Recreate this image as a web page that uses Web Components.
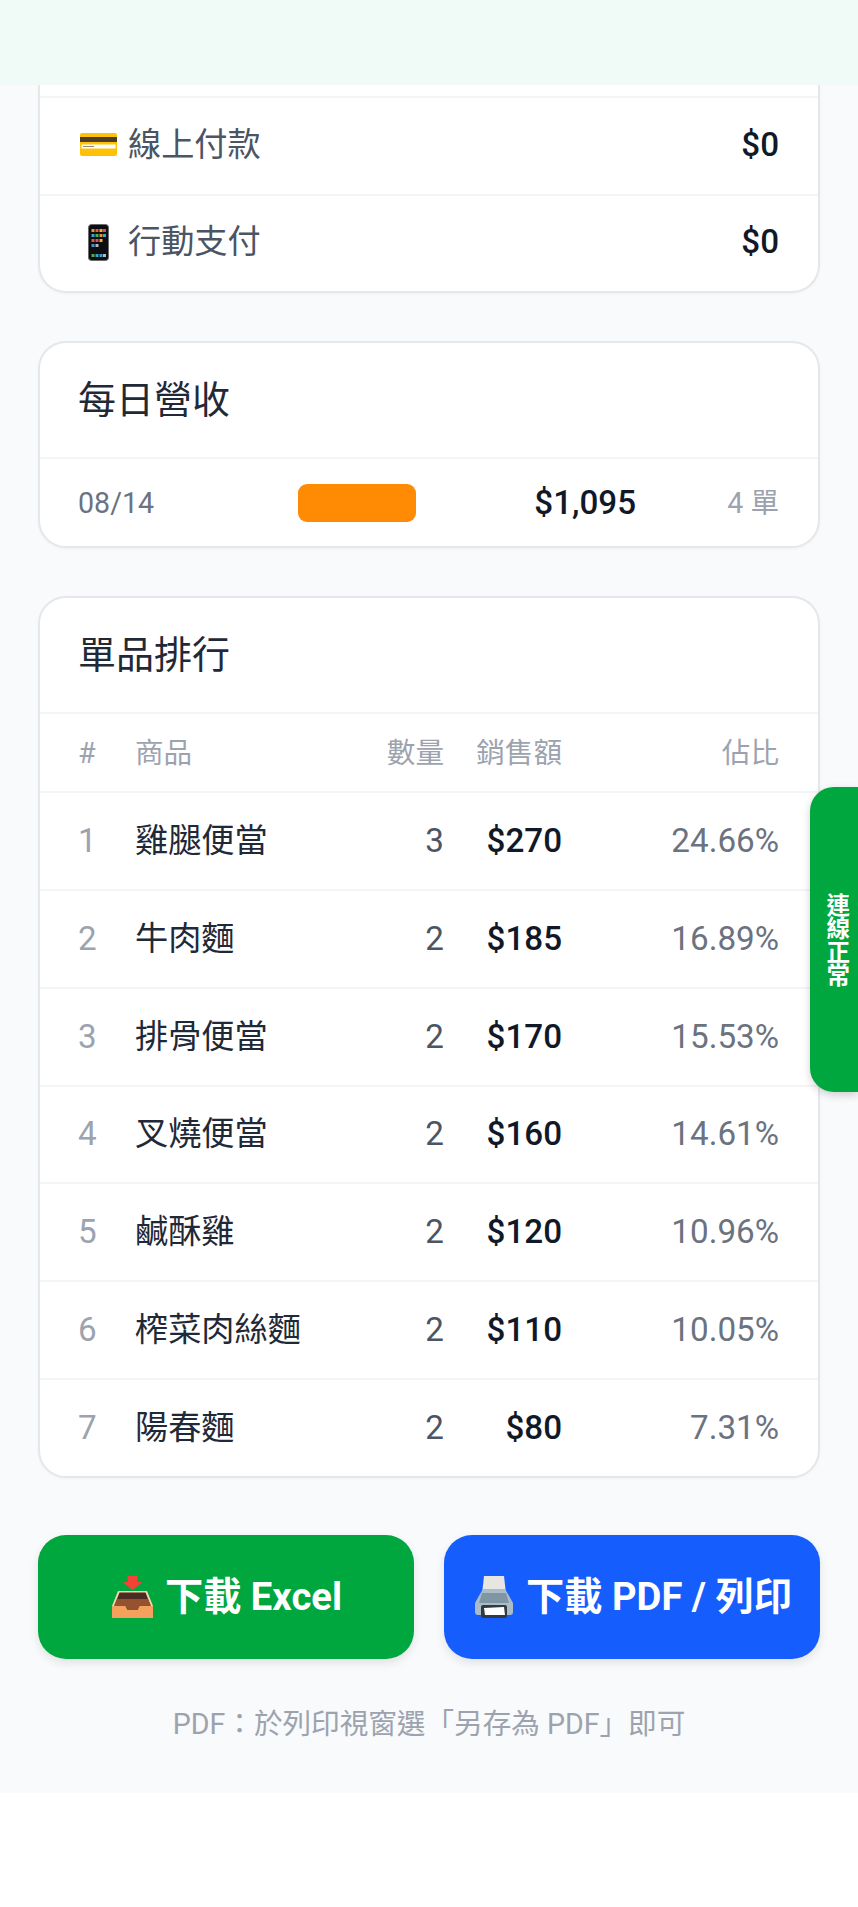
<!DOCTYPE html>
<html lang="zh-Hant">
<head>
<meta charset="utf-8">
<title>報表</title>
<style>
html,body{margin:0;padding:0;background:#fff;}
body{font-family:Roboto,"Noto Sans CJK TC",sans-serif;min-height:1907px;}
</style>
</head>
<body>
<report-page>
  <top-bar slot="top"></top-bar>

  <info-card clipped>
    <div style="height:11px"></div>
    <pay-row amount="$0">
      <svg slot="icon" width="37" height="23" viewBox="0 0 37 23"><rect width="37" height="23" rx="2" fill="#ffc107"/><rect y="4" width="37" height="5" fill="#4b3d2a"/><rect x="1.5" y="11.5" width="34" height="4" fill="#fff"/><path d="M3 13.5h11" stroke="#8a8a8a" stroke-width="1.2"/></svg>
      線上付款
    </pay-row>
    <pay-row amount="$0">
      <svg slot="icon" width="21" height="37" viewBox="0 0 21 37"><rect x="0.5" y="0.5" width="20" height="36" rx="3" fill="#0d0d12" stroke="#6b6b70"/><g><rect x="3.5" y="5" width="3" height="3" fill="#e8912d"/><rect x="7.5" y="5" width="3" height="3" fill="#e05a4a"/><rect x="11.500" y="5" width="3" height="3" fill="#f0b429"/><rect x="15" y="5" width="3" height="3" fill="#d64a7a"/><rect x="3.5" y="10" width="3" height="3" fill="#35a7c9"/><rect x="7.5" y="10" width="3" height="3" fill="#4cb050"/><rect x="11.500" y="10" width="3" height="3" fill="#e8912d"/><rect x="15" y="10" width="3" height="3" fill="#35a7c9"/><rect x="3.5" y="15" width="3" height="3" fill="#e05a4a"/><rect x="7.5" y="15" width="3" height="3" fill="#d64a7a"/><rect x="11.500" y="15" width="3" height="3" fill="#f0b429"/><rect x="3.5" y="20" width="3" height="3" fill="#4a90c9"/><rect x="7.5" y="20" width="3" height="3" fill="#b0b8c0"/><rect x="3.5" y="30" width="3" height="3" fill="#4cb050"/><rect x="7.5" y="30" width="3" height="3" fill="#35a7c9"/><rect x="11.500" y="30" width="3" height="3" fill="#35a7c9"/><rect x="15" y="30" width="3" height="3" fill="#b0b8c0"/></g></svg>
      行動支付
    </pay-row>
  </info-card>

  <info-card heading="每日營收">
    <day-row date="08/14" amount="$1,095" count="4 單"></day-row>
  </info-card>

  <info-card heading="單品排行">
    <rank-row head no="#" name="商品" qty="數量" sales="銷售額" share="佔比"></rank-row>
    <rank-row no="1" name="雞腿便當" qty="3" sales="$270" share="24.66%"></rank-row>
    <rank-row no="2" name="牛肉麵" qty="2" sales="$185" share="16.89%"></rank-row>
    <rank-row no="3" name="排骨便當" qty="2" sales="$170" share="15.53%"></rank-row>
    <rank-row no="4" name="叉燒便當" qty="2" sales="$160" share="14.61%"></rank-row>
    <rank-row no="5" name="鹹酥雞" qty="2" sales="$120" share="10.96%"></rank-row>
    <rank-row no="6" name="榨菜肉絲麵" qty="2" sales="$110" share="10.05%"></rank-row>
    <rank-row no="7" name="陽春麵" qty="2" sales="$80" share="7.31%"></rank-row>
  </info-card>

  <action-bar>
    <action-btn color="#00a63e">
      <svg slot="icon" width="41" height="42" viewBox="0 0 41 42"><path d="M15.500 0h10v6h5L20.500 14 10.500 6h5z" fill="#f44336"/><path d="M6 15h29l6 15v12H0V30z" fill="#f6d7a8"/><path d="M7.500 16.500h26L38.500 29H2.500z" fill="#4a2c22"/><path d="M5 23h31l3 7H28l-2 4H15l-2-4H2z" fill="#96522f"/><path d="M0 30h13l2 4h11l2-4h13v12H0z" fill="#f4a15d"/></svg>
      下載 Excel
    </action-btn>
    <action-btn color="#155dfc">
      <svg slot="icon" width="40" height="42" viewBox="0 0 40 42"><path d="M10 0h20l2 18H8z" fill="#e8e6e2"/><path d="M9 13h22l3 5 5 9v9q0 3-3 3H4q-3 0-3-3v-9l5-9z" fill="#a9bcc8"/><path d="M8 17h24l3 10H5z" fill="#7f96a4"/><rect x="7" y="29" width="26" height="13" rx="2" fill="#33393e"/><path d="M10 32l20-1 1 8H11z" fill="#fff"/></svg>
      下載 PDF / 列印
    </action-btn>
  </action-bar>
  <foot-note>PDF：於列印視窗選「另存為 PDF」即可</foot-note>
</report-page>
<status-tab>連線正常</status-tab>

<script>
function tpl(html) {
  const t = document.createElement('template');
  t.innerHTML = html;
  return t;
}

class Base extends HTMLElement {
  constructor() {
    super();
    this.attachShadow({ mode: 'open' });
  }
  render(t) {
    this.shadowRoot.appendChild(t.content.cloneNode(true));
  }
  text(sel, val) {
    this.shadowRoot.querySelector(sel).textContent = val;
  }
}

const pageT = tpl(`
<style>
:host{display:block;}
main{background:#f9fafb;padding:0 38px 52px;display:flex;flex-direction:column;gap:48px;}
</style>
<slot name="top"></slot>
<main><slot></slot></main>`);
class ReportPage extends Base {
  connectedCallback() { if (!this.shadowRoot.firstChild) this.render(pageT); }
}

const topT = tpl(`<style>:host{display:block;height:85px;background:#f0fbf8;}</style>`);
class TopBar extends Base {
  connectedCallback() { if (!this.shadowRoot.firstChild) this.render(topT); }
}

const cardT = tpl(`
<style>
:host{display:block;background:#fff;border:2px solid #e5e7eb;border-radius:28px;overflow:hidden;box-shadow:0 1px 3px rgba(0,0,0,.04);}
:host([clipped]){border-top:0;border-radius:0 0 28px 28px;}
h2{margin:0;height:114px;padding:0 38px;display:flex;align-items:center;font-size:38px;line-height:46px;font-weight:400;color:#1f2937;}
h2[hidden]{display:none;}
</style>
<h2></h2>
<slot></slot>`);
class InfoCard extends Base {
  connectedCallback() {
    if (this.shadowRoot.firstChild) return;
    this.render(cardT);
    const h = this.shadowRoot.querySelector('h2');
    if (this.hasAttribute('heading')) h.textContent = this.getAttribute('heading');
    else h.hidden = true;
  }
}

const payT = tpl(`
<style>
:host{display:flex;align-items:center;height:93.500px;padding:0 39px 2px 38px;border-top:2px solid #f3f4f6;font-size:33.200px;line-height:40px;color:#4b5563;}
.ic{width:50px;flex:none;display:flex;justify-content:center;padding-right:9px;box-sizing:border-box;}
.t{flex:1;}
b{font-weight:460;color:#111827;}
</style>
<span class="ic"><slot name="icon"></slot></span>
<span class="t"><slot></slot></span>
<b></b>`);
class PayRow extends Base {
  connectedCallback() {
    if (this.shadowRoot.firstChild) return;
    this.render(payT);
    this.text('b', this.getAttribute('amount'));
  }
}

const dayT = tpl(`
<style>
:host{display:flex;align-items:center;height:87px;padding:0 39px 0 38px;border-top:2px solid #f3f4f6;font-size:28.600px;line-height:34px;}
.d{width:220px;color:#6b7280;}
.bar{width:118px;height:38px;background:#ff8a04;border-radius:9px;}
.a{width:220px;text-align:right;font-size:33.200px;font-weight:460;color:#111827;}
.c{flex:1;text-align:right;color:#9ca3af;}
</style>
<span class="d"></span><span class="bar"></span><span class="a"></span><span class="c"></span>`);
class DayRow extends Base {
  connectedCallback() {
    if (this.shadowRoot.firstChild) return;
    this.render(dayT);
    this.text('.d', this.getAttribute('date'));
    this.text('.a', this.getAttribute('amount'));
    this.text('.c', this.getAttribute('count'));
  }
}

const rankT = tpl(`
<style>
:host{display:grid;grid-template-columns:57px 229px 80px 118px 217px;align-items:center;height:95.850px;padding:0 39px 0 38px;border-top:2px solid #f3f4f6;font-size:33.200px;line-height:40px;}
:host([head]){height:77px;font-size:28.600px;line-height:34px;}
:host([head]) span{color:#9ca3af !important;font-weight:400 !important;}
.no{color:#9ca3af;}
.name{color:#1f2937;}
.qty{color:#4b5563;text-align:right;}
.sales{color:#111827;font-weight:460;text-align:right;}
.share{color:#6b7280;text-align:right;}
</style>
<span class="no"></span><span class="name"></span><span class="qty"></span><span class="sales"></span><span class="share"></span>`);
class RankRow extends Base {
  connectedCallback() {
    if (this.shadowRoot.firstChild) return;
    this.render(rankT);
    for (const k of ['no', 'name', 'qty', 'sales', 'share']) this.text('.' + k, this.getAttribute(k));
  }
}

const barT = tpl(`<style>:host{display:grid;grid-template-columns:1fr 1fr;gap:30px;margin-top:9px;}</style><slot></slot>`);
class ActionBar extends Base {
  connectedCallback() { if (!this.shadowRoot.firstChild) this.render(barT); }
}

const btnT = tpl(`
<style>
:host{display:block;}
button{all:unset;box-sizing:border-box;width:100%;height:124px;padding-left:2px;display:flex;align-items:center;justify-content:center;gap:12px;border-radius:28px;color:#fff;font:700 38.200px/46px Roboto,"Noto Sans CJK TC",sans-serif;box-shadow:0 4px 10px rgba(0,0,0,.1);white-space:nowrap;}
</style>
<button><slot name="icon"></slot><span><slot></slot></span></button>`);
class ActionBtn extends Base {
  connectedCallback() {
    if (this.shadowRoot.firstChild) return;
    this.render(btnT);
    this.shadowRoot.querySelector('button').style.background = this.getAttribute('color');
  }
}

const noteT = tpl(`<style>:host{display:block;text-align:center;font-size:28.600px;line-height:34px;color:#9ca3af;}</style><slot></slot>`);
class FootNote extends Base {
  connectedCallback() { if (!this.shadowRoot.firstChild) this.render(noteT); }
}

const tabT = tpl(`
<style>
:host{position:absolute;right:0;top:787px;width:48px;height:305px;box-sizing:border-box;padding-left:3px;background:#00a63e;border-radius:24px 0 0 24px;color:#fff;display:flex;align-items:center;justify-content:center;font-size:23.500px;font-weight:700;line-height:1;box-shadow:0 3px 8px rgba(0,0,0,.18);}
span{writing-mode:vertical-rl;}
</style>
<span><slot></slot></span>`);
class StatusTab extends Base {
  connectedCallback() { if (!this.shadowRoot.firstChild) this.render(tabT); }
}

customElements.define('report-page', ReportPage);
customElements.define('top-bar', TopBar);
customElements.define('info-card', InfoCard);
customElements.define('pay-row', PayRow);
customElements.define('day-row', DayRow);
customElements.define('rank-row', RankRow);
customElements.define('action-bar', ActionBar);
customElements.define('action-btn', ActionBtn);
customElements.define('foot-note', FootNote);
customElements.define('status-tab', StatusTab);
</script>
</body>
</html>
